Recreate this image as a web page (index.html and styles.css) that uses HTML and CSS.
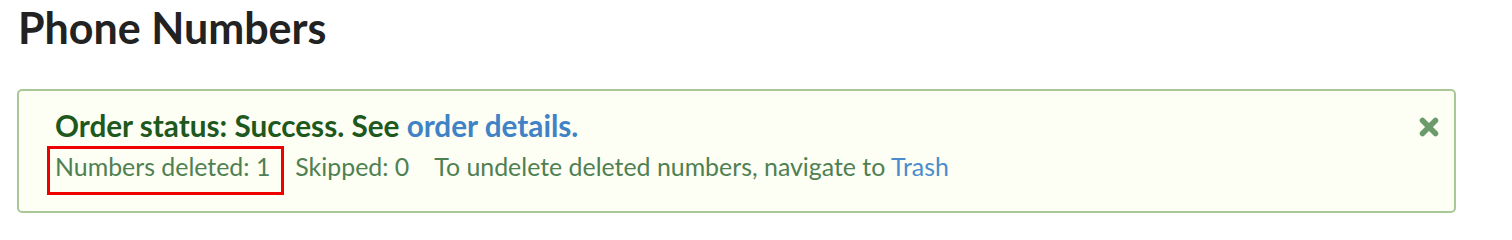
FILE: index.html
```html
<!DOCTYPE html>
<html>
<head>
<meta charset="utf-8">
<link rel="stylesheet" href="styles.css">
</head>
<body>
<div class="page">
  <h1 class="title">Phone Numbers</h1>
  <div class="alert">
    <div class="alert-body">
      <div class="alert-head">Order status: Success. See <a class="link" href="#">order details.</a></div>
      <div class="alert-line">
        <span class="highlight">Numbers deleted: 1</span>
        <span class="item">Skipped: 0</span>
        <span class="item">To undelete deleted numbers, navigate to <a class="link-plain" href="#">Trash</a></span>
      </div>
    </div>
    <button class="close" aria-label="Close">
      <svg width="22" height="22" viewBox="0 0 22 22"><path d="M4.5 4.5 L17.5 17.5 M17.5 4.5 L4.5 17.5" stroke="#6b9a6b" stroke-width="5.5" stroke-linecap="round" fill="none"/></svg>
    </button>
  </div>
</div>
</body>
</html>
```

FILE: styles.css
```css
html, body {
  margin: 0;
  padding: 0;
  background: #ffffff;
}
.page {
  padding: 2px 56px 0 17px;
  font-family: Lato, "Liberation Sans", sans-serif;
}
.title {
  margin: 0 0 0 1px;
  font-size: 43px;
  font-weight: 700;
  color: #222222;
  line-height: 52px;
}
.alert {
  margin-top: 35px;
  border: 2px solid #a8c898;
  border-radius: 5px;
  background: #fdfef4;
  display: flex;
  justify-content: space-between;
  align-items: flex-start;
  padding: 18px 14px 30px 36px;
}
.alert-head {
  font-size: 29.7px;
  font-weight: 700;
  color: #1d581d;
  line-height: 34px;
}
.link {
  color: #3f82c6;
  text-decoration: none;
}
.alert-line {
  margin-top: 8px;
  font-size: 24.9px;
  color: #4f8052;
  line-height: 30px;
  display: flex;
  gap: 25px;
}
.highlight {
  display: inline-block;
  padding: 2px 11px 11px 5px;
  margin: -2px -11px -11px -5px;
  outline: 3.5px solid #ee0000;
}
.link-plain {
  color: #4a8ccc;
  text-decoration: none;
}
.close {
  border: 0;
  background: none;
  padding: 0;
  margin-top: 7px;
  width: 22px;
  height: 22px;
  cursor: pointer;
}
```
